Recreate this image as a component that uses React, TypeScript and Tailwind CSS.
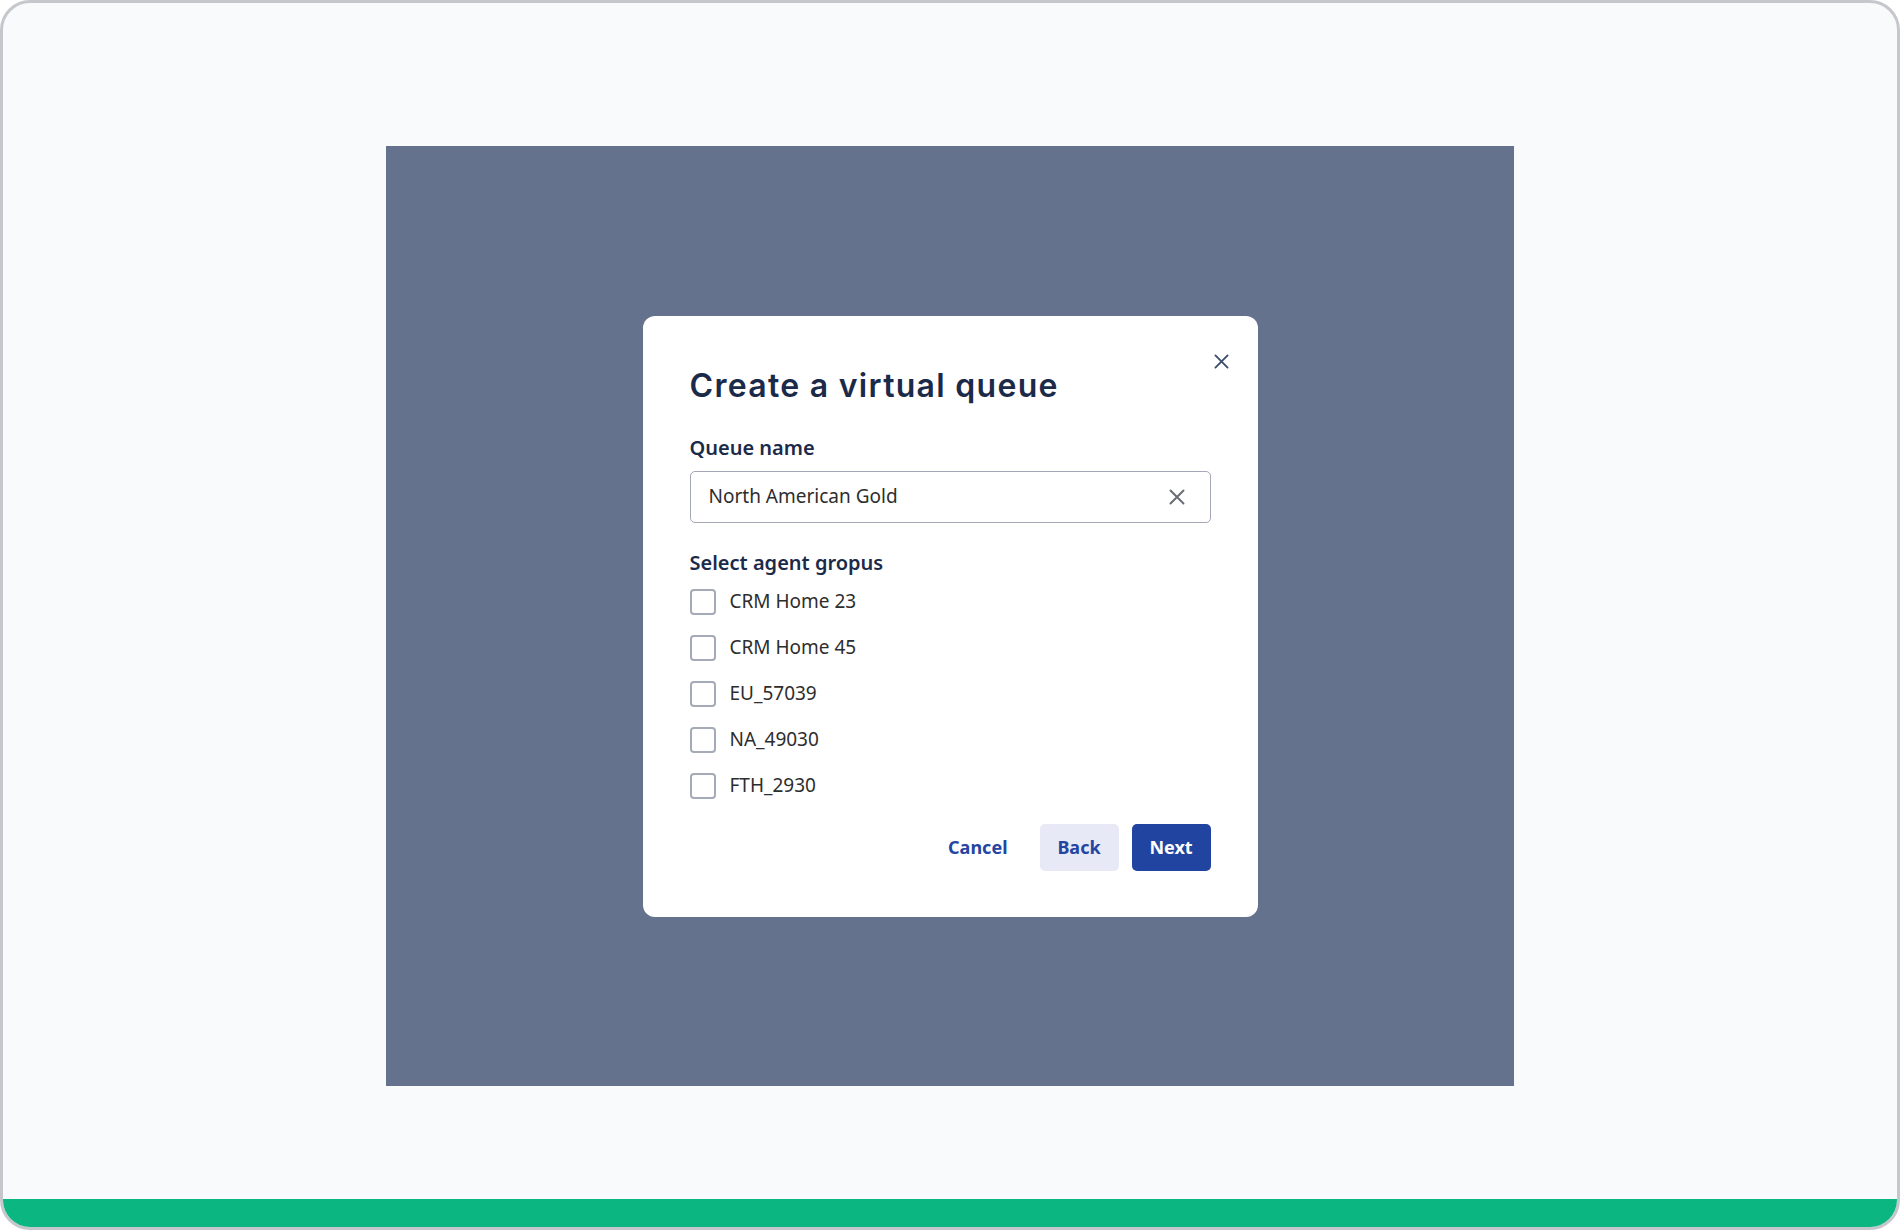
import { useState } from "react";

const groups = ["CRM Home 23", "CRM Home 45", "EU_57039", "NA_49030", "FTH_2930"];

const Cross = ({ size, className }: { size: number; className?: string }) => (
    <svg width={size} height={size} viewBox="0 0 16 16" className={className} fill="none">
        <path d="M1.5 1.5 14.5 14.5M14.5 1.5 1.5 14.5" stroke="currentColor" strokeWidth="2" strokeLinecap="round" />
    </svg>
);

const App = () => {
    const [queueName, setQueueName] = useState("North American Gold");
    const [checked, setChecked] = useState<string[]>([]);

    const toggle = (g: string) => {
        setChecked((prev) => (prev.includes(g) ? prev.filter((x) => x !== g) : [...prev, g]));
    };

    return (
        <div className="h-[1230px] w-full bg-[#f9fafc] border-[3px] border-[#c6c7cc] rounded-[30px] overflow-hidden flex flex-col font-['Noto_Sans',sans-serif]">
            <div className="flex-1 pt-[143px]">
                {/* dimmed backdrop */}
                <div className="mx-auto w-[1128px] h-[940px] bg-[#64728e] flex items-center justify-center">
                    <div className="relative w-[615px] bg-white rounded-[12px] px-[47px] pt-[51px] pb-[46px]">
                        <button className="absolute top-[38px] right-[28px] w-[16px] h-[16px] text-[#3d4d6b]">
                            <Cross size={15} />
                        </button>

                        <h2 className="text-[32px] leading-[38px] font-semibold text-[#1c2a4a] font-['Inter',sans-serif] tracking-[1.3px]">
                            Create a virtual queue
                        </h2>

                        <label className="block mt-[31px] text-[20px] leading-[24px] font-semibold text-[#1c2a4a]">
                            Queue name
                        </label>
                        <div className="mt-[11px] h-[52px] flex items-center border-[1.5px] border-[#a4a8b6] rounded-[5px] pl-[18px] pr-[25px]">
                            <input
                                value={queueName}
                                onChange={(e) => setQueueName(e.target.value)}
                                className="flex-1 outline-none text-[19px] text-[#2d2d2d] bg-transparent"
                            />
                            <button className="text-[#6b6d75]" onClick={() => setQueueName("")}>
                                <Cross size={16} />
                            </button>
                        </div>

                        <div className="mt-[28px] text-[20px] leading-[24px] font-semibold text-[#1c2a4a]">
                            Select agent gropus
                        </div>
                        <div className="mt-[14px] flex flex-col gap-[20px]">
                            {groups.map((g) => (
                                <label key={g} className="flex items-center h-[26px] cursor-pointer" onClick={() => toggle(g)}>
                                    <span
                                        className={`w-[26px] h-[26px] rounded-[4px] border-2 ${
                                            checked.includes(g) ? "border-[#2144a1] bg-[#2144a1]" : "border-[#a5aab8] bg-white"
                                        }`}
                                    />
                                    <span className="ml-[14px] text-[19px] text-[#2d2d2d]">{g}</span>
                                </label>
                            ))}
                        </div>

                        <div className="mt-[25px] flex justify-end items-center gap-[13px]">
                            <button className="h-[47px] px-[19px] text-[18px] font-bold text-[#2445a0]">Cancel</button>
                            <button className="h-[47px] w-[79px] rounded-[5px] bg-[#e8e9f7] text-[18px] font-bold text-[#2445a0]">
                                Back
                            </button>
                            <button className="h-[47px] w-[79px] rounded-[5px] bg-[#2144a1] text-[18px] font-bold text-white">
                                Next
                            </button>
                        </div>
                    </div>
                </div>
            </div>
            <div className="h-[28px] bg-[#0bb680]" />
        </div>
    );
};

export default App;
